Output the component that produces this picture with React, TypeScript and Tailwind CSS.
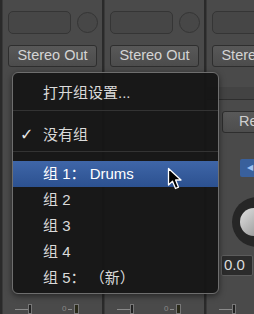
import React from 'react';

const cjk = { fontFamily: '"Liberation Sans", "Noto Sans CJK SC", sans-serif' };

function Strip({ label, children }: { label: string; children?: React.ReactNode }) {
  return (
    <div className="flex h-full shrink-0">
      <div className="w-[3px] h-full bg-[#2a2a2a] border-r border-[#3a3a3a]" />
      <div className="flex flex-col w-[99px] h-full bg-[#4a4a4a]">
        <div className="flex items-center gap-[6px] pl-[5px] pt-[11px]">
          <div className="w-[63px] h-[23px] rounded-[5px] border border-[#353535] bg-[#464646]" />
          <div className="w-[21px] h-[21px] rounded-full border border-[#353535] bg-[#474747]" />
        </div>
        <div className="ml-[5px] mt-[11px] w-[89px] h-[22px] rounded-[3px] border border-[#2e2e2e] bg-gradient-to-b from-[#585858] to-[#4c4c4c] flex items-center justify-center text-[14.5px] text-[#d4d4d4] whitespace-nowrap overflow-hidden" style={cjk}>
          {label}
        </div>
        {children}
      </div>
    </div>
  );
}

function BottomFaders() {
  return (
    <div className="mt-auto mb-0 flex items-end h-[14px] pl-[12px] gap-[30px]">
      <div className="flex items-center h-[10px]">
        <div className="w-[13px] h-px bg-[#8a8a8a]" />
        <div className="w-[4px] h-[10px] bg-[#222] border border-[#777]" />
      </div>
      <div className="flex items-center h-[10px] gap-[2px]">
        <span className="text-[8px] leading-none text-[#888]" style={cjk}>0</span>
        <div className="w-[4px] h-px bg-[#8a8a8a]" />
        <div className="w-[5px] h-[10px] bg-[#2a2a1a] border border-[#777]" />
      </div>
    </div>
  );
}

function MenuItem({ children, active, check }: { children: React.ReactNode; active?: boolean; check?: boolean }) {
  return (
    <div className={`relative h-[26px] flex items-center pl-[30px] text-[15px] whitespace-nowrap ${active ? 'bg-gradient-to-b from-[#3f66a8] to-[#2c5190] text-white' : 'text-[#dadada]'}`} style={cjk}>
      {check && <span className="absolute left-[7px] text-[16px] text-[#e6e6e6]" style={{ fontFamily: '"DejaVu Sans", sans-serif' }}>✓</span>}
      {children}
    </div>
  );
}

export default function App() {
  return (
    <div className="relative w-[254px] h-[314px] overflow-hidden bg-[#4a4a4a]">
      <div className="flex h-full">
        <Strip label="Stereo Out">
          <BottomFaders />
        </Strip>
        <Strip label="Stereo Out">
          <BottomFaders />
        </Strip>
        <Strip label="Stereo Out">
          <div className="mt-[20px] h-[13px] bg-[#434343] border-b border-[#2e2e2e]" />
          <div className="ml-[15px] mt-[11px] w-[60px] h-[22px] rounded-[3px] border border-[#2e2e2e] bg-gradient-to-b from-[#595959] to-[#4d4d4d] flex items-center pl-[16px] text-[14.5px] text-[#cfcfcf]" style={cjk}>
            Re
          </div>
          <div className="ml-[33px] mt-[26px] w-[40px] h-[18px] rounded-[2px] bg-[#39609c] flex items-center pl-[7px]">
            <span className="text-[8px] text-[#9fc0f0]" style={{ fontFamily: '"DejaVu Sans", sans-serif' }}>◀</span>
          </div>
          <div className="ml-[25px] mt-[20px] w-[52px] h-[50px] rounded-full bg-[#262626] flex items-center pl-[8px]">
            <div className="w-[28px] h-[28px] rounded-full bg-gradient-to-br from-[#e2e2e2] to-[#8c8c8c]" />
          </div>
          <div className="ml-[14px] mt-[8px] w-[32px] h-[21px] rounded-[2px] bg-[#2b2b2b] border border-[#5c5c5c] flex items-center pl-[2px] text-[15px] text-[#dcdcdc]" style={cjk}>
            0.0
          </div>
          <BottomFaders />
        </Strip>
      </div>

      <div className="absolute left-[12px] top-[72px] w-[207px] h-[222px] rounded-[6px] border border-[#6e6e6e] bg-[#151515]/95 shadow-[0_2px_6px_rgba(0,0,0,0.5)] pt-[7px] overflow-hidden">
        <MenuItem>打开组设置...</MenuItem>
        <div className="mt-[4px] mb-[11px] h-px bg-[#333]" />
        <MenuItem check>没有组</MenuItem>
        <div className="mt-[3px] mb-[9px] h-px bg-[#333]" />
        <MenuItem active>组 1：&nbsp;Drums</MenuItem>
        <MenuItem>组 2</MenuItem>
        <MenuItem>组 3</MenuItem>
        <MenuItem>组 4</MenuItem>
        <MenuItem>组 5：&nbsp;（新）</MenuItem>
      </div>

      <svg className="absolute left-[167px] top-[167px]" width="17" height="24" viewBox="0 0 17 24">
        <path d="M1.5 1.5 L1.5 18 L5.5 14.2 L8.5 21.5 L11.5 20.2 L8.6 13 L14 13 Z" fill="#000" stroke="#fff" strokeWidth="1.3" strokeLinejoin="round" />
      </svg>
    </div>
  );
}
